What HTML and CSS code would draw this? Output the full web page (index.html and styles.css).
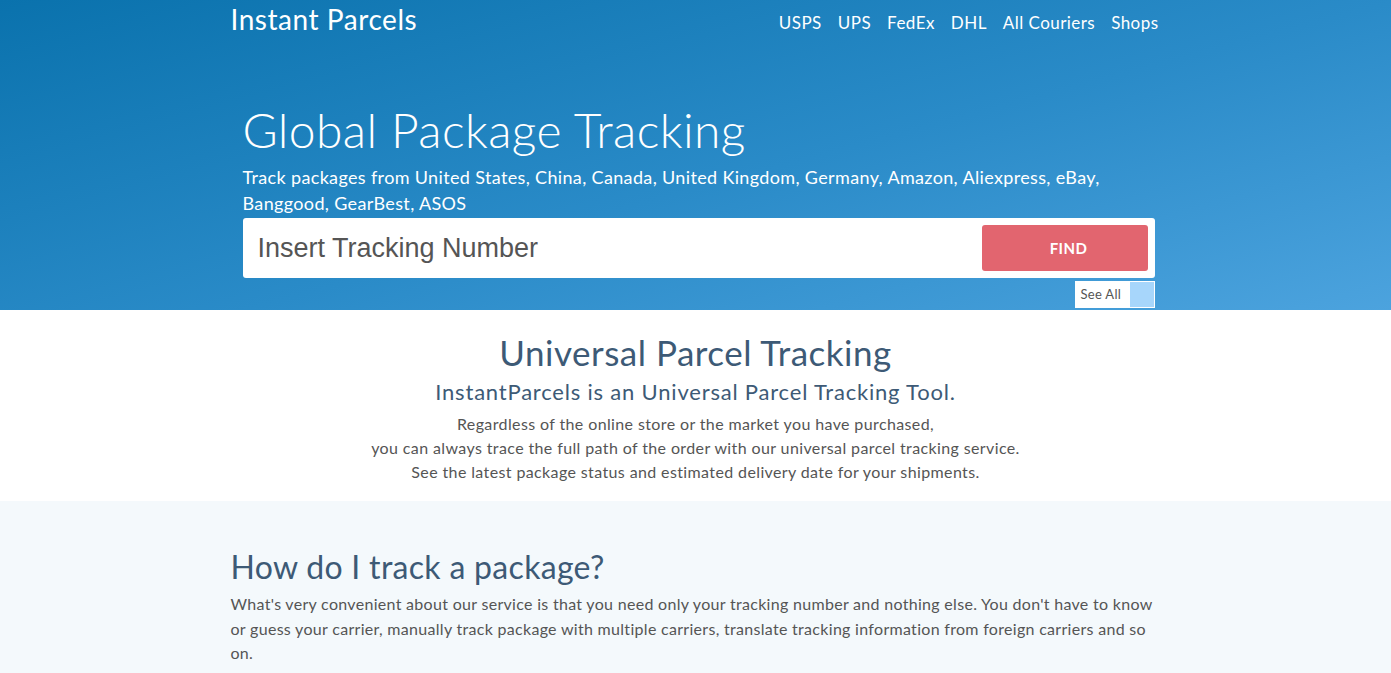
FILE: index.html
```html
<!DOCTYPE html>
<html lang="en">
<head>
<meta charset="utf-8">
<title>Instant Parcels - Global Package Tracking</title>
<link rel="stylesheet" href="styles.css">
</head>
<body>
<header class="hero">
  <div class="container">
    <nav class="topbar">
      <a class="brand" href="#">Instant Parcels</a>
      <ul class="nav">
        <li><a href="#">USPS</a></li>
        <li><a href="#">UPS</a></li>
        <li><a href="#">FedEx</a></li>
        <li><a href="#">DHL</a></li>
        <li><a href="#">All Couriers</a></li>
        <li><a href="#">Shops</a></li>
      </ul>
    </nav>
    <div class="hero-body">
      <h1 class="hero-title">Global Package Tracking</h1>
      <p class="hero-sub">Track packages from United States, China, Canada, United Kingdom, Germany, Amazon, Aliexpress, eBay, Banggood, GearBest, ASOS</p>
      <form class="search">
        <input class="search-input" type="text" placeholder="Insert Tracking Number">
        <button class="search-btn" type="button">FIND</button>
      </form>
      <div class="seeall-row">
        <a class="seeall" href="#"><span class="seeall-text">See All</span><span class="seeall-swatch"></span></a>
      </div>
    </div>
  </div>
</header>

<section class="intro">
  <div class="container">
    <h2 class="intro-title">Universal Parcel Tracking</h2>
    <h3 class="intro-sub">InstantParcels is an Universal Parcel Tracking Tool.</h3>
    <p class="intro-text">Regardless of the online store or the market you have purchased,<br>you can always trace the full path of the order with our universal parcel tracking service.<br>See the latest package status and estimated delivery date for your shipments.</p>
  </div>
</section>

<section class="howto">
  <div class="container">
    <h2 class="howto-title">How do I track a package?</h2>
    <p class="howto-text">What's very convenient about our service is that you need only your tracking number and nothing else. You don't have to know or guess your carrier, manually track package with multiple carriers, translate tracking information from foreign carriers and so on.</p>
  </div>
</section>
</body>
</html>
```

FILE: styles.css
```css
* { box-sizing: border-box; }
html, body { margin: 0; padding: 0; }
body {
  font-family: Lato, "Open Sans", sans-serif;
  color: #555;
  background: #f4f9fc;
}
a { text-decoration: none; color: inherit; }
.container {
  width: 930px;
  margin: 0 auto;
}

.hero {
  background: linear-gradient(165deg, #0a72ad 0%, #2a8bc8 55%, #4ca3de 100%);
  height: 310px;
  color: #fff;
}
.topbar {
  display: flex;
  justify-content: space-between;
  align-items: flex-start;
  height: 48px;
}
.brand {
  font-size: 28px;
  line-height: 39px;
  color: #fff;
  letter-spacing: 0.55px;
}
.nav {
  display: flex;
  list-style: none;
  margin: 0;
  padding: 0;
  gap: 16px;
  margin-right: 2px;
}
.nav a {
  font-size: 17px;
  line-height: 46px;
  color: #fff;
  letter-spacing: 0.45px;
}

.hero-body {
  padding: 0 6px 0 12px;
}
.hero-title {
  font-size: 48px;
  font-weight: 300;
  margin: 52px 0 0;
  line-height: 60px;
  letter-spacing: 0.4px;
}
.hero-sub {
  font-size: 18px;
  line-height: 26px;
  margin: 4px 0 0;
  letter-spacing: 0.35px;
}
.search {
  display: flex;
  align-items: center;
  height: 60px;
  background: #fff;
  border-radius: 3px;
  margin-top: 2px;
  padding: 0 7px 0 15px;
}
.search-input {
  flex: 1;
  border: 0;
  outline: 0;
  height: 46px;
  font-family: "Liberation Sans", Arial, sans-serif;
  font-size: 27px;
  color: #555;
  padding: 0;
  background: transparent;
}
.search-input::placeholder { color: #555; }
.search-btn {
  width: 166px;
  height: 46px;
  background: #e2656f;
  border: 0;
  border-radius: 3px;
  color: #fff;
  font-family: Lato, sans-serif;
  font-weight: 700;
  font-size: 15px;
  letter-spacing: 0.4px;
  padding: 0 0 0 8px;
}
.seeall-row {
  display: flex;
  justify-content: flex-end;
  margin-top: 3px;
}
.seeall {
  display: flex;
  height: 27px;
  width: 80px;
  background: #fff;
  border: 1px solid #fff;
}
.seeall-text {
  flex: 1;
  font-size: 13px;
  line-height: 25px;
  color: #555;
  padding-left: 5px;
  letter-spacing: 0.3px;
}
.seeall-swatch {
  width: 24px;
  background: #a7d6fb;
}

.intro {
  background: #fff;
  text-align: center;
  padding: 20px 0 17px;
  color: #3d5a76;
}
.intro-title {
  font-size: 35px;
  font-weight: 400;
  margin: 0;
  line-height: 44px;
  letter-spacing: 0.5px;
}
.intro-sub {
  font-size: 22px;
  font-weight: 400;
  margin: 3px 0 0;
  line-height: 30px;
  letter-spacing: 0.8px;
}
.intro-text {
  font-size: 16px;
  line-height: 24px;
  color: #555;
  margin: 5px 0 0;
  letter-spacing: 0.38px;
}

.howto {
  padding: 46px 0 20px;
}
.howto-title {
  font-size: 32px;
  font-weight: 400;
  color: #3d5a76;
  margin: 0;
  line-height: 40px;
  letter-spacing: 0.3px;
}
.howto-text {
  font-size: 16px;
  line-height: 24.5px;
  margin: 5px 0 0;
  color: #555;
  letter-spacing: 0.3px;
}
```
